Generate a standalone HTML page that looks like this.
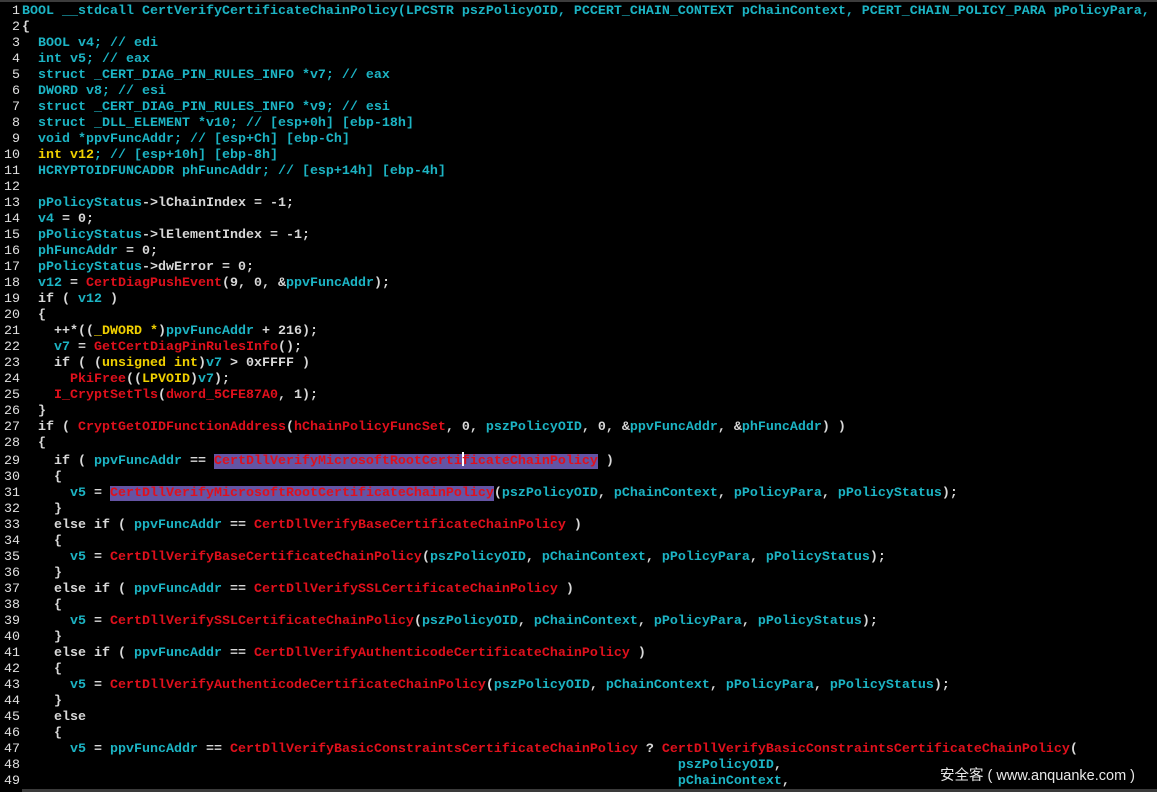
<!DOCTYPE html>
<html><head><meta charset="utf-8"><style>
html,body{margin:0;padding:0;background:#000;width:1157px;height:792px;overflow:hidden;position:relative}
.top{position:absolute;left:0;top:0;width:1157px;height:2px;background:#3c3c3c}
.bot{position:absolute;left:22px;top:789px;width:1135px;height:3px;background:#3a3a3a}
.code{position:absolute;left:0;top:4px;font-family:"Liberation Mono",monospace;font-size:13.33px;line-height:16px;font-weight:bold;color:#d8d8d8;white-space:pre}
.ln{display:inline-block;width:20px;text-align:right;margin-right:2px;color:#e0e0e0;font-weight:normal}
.c{color:#1cb4c4}.r{color:#e0101c}.y{color:#f0d000}
.s{background:#6454a4}
.cur{display:inline-block;width:2px;height:14px;background:#fff;vertical-align:-2px;margin-right:-2px}
.wm{position:absolute;left:940px;top:764px;font-family:"Liberation Sans","Noto Sans CJK SC",sans-serif;font-size:14.5px;color:#e8e8e8}
</style></head><body>
<div class="top"></div>
<div class="code"><span class="ln">1</span><span class="c">BOOL __stdcall CertVerifyCertificateChainPolicy(LPCSTR pszPolicyOID, PCCERT_CHAIN_CONTEXT pChainContext, PCERT_CHAIN_POLICY_PARA pPolicyPara,</span>
<span class="ln">2</span>{
<span class="ln">3</span>  <span class="c">BOOL v4; // edi</span>
<span class="ln">4</span>  <span class="c">int v5; // eax</span>
<span class="ln">5</span>  <span class="c">struct _CERT_DIAG_PIN_RULES_INFO *v7; // eax</span>
<span class="ln">6</span>  <span class="c">DWORD v8; // esi</span>
<span class="ln">7</span>  <span class="c">struct _CERT_DIAG_PIN_RULES_INFO *v9; // esi</span>
<span class="ln">8</span>  <span class="c">struct _DLL_ELEMENT *v10; // [esp+0h] [ebp-18h]</span>
<span class="ln">9</span>  <span class="c">void *ppvFuncAddr; // [esp+Ch] [ebp-Ch]</span>
<span class="ln">10</span>  <span class="y">int v12</span><span class="c">; // [esp+10h] [ebp-8h]</span>
<span class="ln">11</span>  <span class="c">HCRYPTOIDFUNCADDR phFuncAddr; // [esp+14h] [ebp-4h]</span>
<span class="ln">12</span>
<span class="ln">13</span>  <span class="c">pPolicyStatus</span>-&gt;lChainIndex = -1;
<span class="ln">14</span>  <span class="c">v4</span> = 0;
<span class="ln">15</span>  <span class="c">pPolicyStatus</span>-&gt;lElementIndex = -1;
<span class="ln">16</span>  <span class="c">phFuncAddr</span> = 0;
<span class="ln">17</span>  <span class="c">pPolicyStatus</span>-&gt;dwError = 0;
<span class="ln">18</span>  <span class="c">v12</span> = <span class="r">CertDiagPushEvent</span>(9, 0, &amp;<span class="c">ppvFuncAddr</span>);
<span class="ln">19</span>  if ( <span class="c">v12</span> )
<span class="ln">20</span>  {
<span class="ln">21</span>    ++*((<span class="y">_DWORD *</span>)<span class="c">ppvFuncAddr</span> + 216);
<span class="ln">22</span>    <span class="c">v7</span> = <span class="r">GetCertDiagPinRulesInfo</span>();
<span class="ln">23</span>    if ( (<span class="y">unsigned int</span>)<span class="c">v7</span> &gt; 0xFFFF )
<span class="ln">24</span>      <span class="r">PkiFree</span>((<span class="y">LPVOID</span>)<span class="c">v7</span>);
<span class="ln">25</span>    <span class="r">I_CryptSetTls</span>(<span class="r">dword_5CFE87A0</span>, 1);
<span class="ln">26</span>  }
<span class="ln">27</span>  if ( <span class="r">CryptGetOIDFunctionAddress</span>(<span class="r">hChainPolicyFuncSet</span>, 0, <span class="c">pszPolicyOID</span>, 0, &amp;<span class="c">ppvFuncAddr</span>, &amp;<span class="c">phFuncAddr</span>) )
<span class="ln">28</span>  {
<span class="ln">29</span>    if ( <span class="c">ppvFuncAddr</span> == <span class="r s">CertDllVerifyMicrosoftRootCerti<span class="cur"></span>ficateChainPolicy</span> )
<span class="ln">30</span>    {
<span class="ln">31</span>      <span class="c">v5</span> = <span class="r s">CertDllVerifyMicrosoftRootCertificateChainPolicy</span>(<span class="c">pszPolicyOID</span>, <span class="c">pChainContext</span>, <span class="c">pPolicyPara</span>, <span class="c">pPolicyStatus</span>);
<span class="ln">32</span>    }
<span class="ln">33</span>    else if ( <span class="c">ppvFuncAddr</span> == <span class="r">CertDllVerifyBaseCertificateChainPolicy</span> )
<span class="ln">34</span>    {
<span class="ln">35</span>      <span class="c">v5</span> = <span class="r">CertDllVerifyBaseCertificateChainPolicy</span>(<span class="c">pszPolicyOID</span>, <span class="c">pChainContext</span>, <span class="c">pPolicyPara</span>, <span class="c">pPolicyStatus</span>);
<span class="ln">36</span>    }
<span class="ln">37</span>    else if ( <span class="c">ppvFuncAddr</span> == <span class="r">CertDllVerifySSLCertificateChainPolicy</span> )
<span class="ln">38</span>    {
<span class="ln">39</span>      <span class="c">v5</span> = <span class="r">CertDllVerifySSLCertificateChainPolicy</span>(<span class="c">pszPolicyOID</span>, <span class="c">pChainContext</span>, <span class="c">pPolicyPara</span>, <span class="c">pPolicyStatus</span>);
<span class="ln">40</span>    }
<span class="ln">41</span>    else if ( <span class="c">ppvFuncAddr</span> == <span class="r">CertDllVerifyAuthenticodeCertificateChainPolicy</span> )
<span class="ln">42</span>    {
<span class="ln">43</span>      <span class="c">v5</span> = <span class="r">CertDllVerifyAuthenticodeCertificateChainPolicy</span>(<span class="c">pszPolicyOID</span>, <span class="c">pChainContext</span>, <span class="c">pPolicyPara</span>, <span class="c">pPolicyStatus</span>);
<span class="ln">44</span>    }
<span class="ln">45</span>    else
<span class="ln">46</span>    {
<span class="ln">47</span>      <span class="c">v5</span> = <span class="c">ppvFuncAddr</span> == <span class="r">CertDllVerifyBasicConstraintsCertificateChainPolicy</span> ? <span class="r">CertDllVerifyBasicConstraintsCertificateChainPolicy</span>(
<span class="ln">48</span>                                                                                  <span class="c">pszPolicyOID</span>,
<span class="ln">49</span>                                                                                  <span class="c">pChainContext</span>,</div>
<div class="wm">安全客 ( www.anquanke.com )</div>
<div class="bot"></div>
</body></html>
